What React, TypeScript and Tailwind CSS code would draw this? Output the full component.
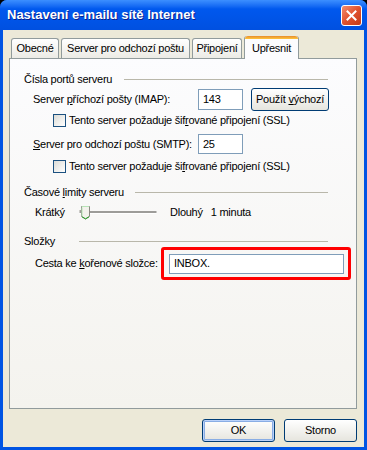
import * as React from 'react';

const font = { fontFamily: '"Liberation Sans", Arial, sans-serif' };

const Tab = ({ label, w, active }: { label: string; w: number; active?: boolean }) => {
  if (active) {
    return (
      <div
        className="relative z-10 -mb-px flex h-[23px] flex-col rounded-t-[3px] border-x border-[#919B9C] bg-[#FCFCFE]"
        style={{ width: w }}
      >
        <div className="h-[3px] rounded-t-[3px] bg-gradient-to-b from-[#E68B2C] to-[#FFC73C]" />
        <div className="flex flex-1 items-center justify-center pb-[2px]">{label}</div>
      </div>
    );
  }
  return (
    <div
      className="flex h-[20px] items-center justify-center rounded-t-[3px] border-x border-t border-[#919B9C] bg-gradient-to-b from-white to-[#ECEBE5] pb-[1px]"
      style={{ width: w }}
    >
      {label}
    </div>
  );
};

const Heading = ({ children, w }: { children: React.ReactNode; w: number }) => (
  <div className="flex h-[14px] items-center pl-[14px] pr-[28px]">
    <span className="shrink-0" style={{ width: w }}>
      {children}
    </span>
    <div className="h-px flex-1 bg-[#B9B7AA]" />
  </div>
);

const Checkbox = ({ children }: { children: React.ReactNode }) => (
  <div className="flex h-[13px] items-center pl-[43px]">
    <div className="h-[13px] w-[13px] shrink-0 border border-[#1C5180] bg-gradient-to-br from-[#DCDCD7] to-white" />
    <span className="ml-[3px]">{children}</span>
  </div>
);

const Input = ({ value, className }: { value: string; className: string }) => (
  <div className={`flex shrink-0 items-center border border-[#7F9DB9] bg-white pl-[4px] ${className}`}>{value}</div>
);

const Button = ({ children, w, focused }: { children: React.ReactNode; w: number; focused?: boolean }) => (
  <div
    className={`flex h-[23px] shrink-0 items-center justify-center rounded-[3px] border border-[#003C74] bg-gradient-to-b from-white to-[#E6E5DE] ${
      focused ? 'shadow-[inset_0_0_0_1px_#B9D1FA,inset_0_0_0_2px_#89ADE4]' : ''
    }`}
    style={{ width: w }}
  >
    {children}
  </div>
);

export default function App() {
  return (
    <div className="h-[450px] w-[367px] whitespace-nowrap bg-black text-[11px] text-black" style={font}>
      <div className="flex h-full flex-col overflow-hidden rounded-t-[7px] bg-[#0054E3]">
        {/* title bar */}
        <div className="flex h-[30px] shrink-0 items-center justify-between bg-gradient-to-b from-[#3C8FFF] via-[#0058EE] via-30% to-[#0050E0] pl-[7px] pr-[5px]">
          <span className="text-[13px] font-bold text-white [text-shadow:1px_1px_0_#0A1E8C]">
            Nastavení e-mailu sítě Internet
          </span>
          <div className="flex h-[21px] w-[21px] items-center justify-center rounded-[3px] border border-white bg-gradient-to-br from-[#F28C6E] via-[#E0512D] to-[#C43A17]">
            <svg width="11" height="11" viewBox="0 0 11 11">
              <path d="M1.5 1.5 L9.5 9.5 M9.5 1.5 L1.5 9.5" stroke="white" strokeWidth="2" strokeLinecap="square" />
            </svg>
          </div>
        </div>

        {/* body */}
        <div className="mx-[3px] mb-[3px] flex flex-1 flex-col bg-[#ECE9D8] pl-[6px] pr-[7px] pt-[5px] tracking-[-0.25px]">
          <div className="flex h-[23px] items-end gap-[2px] pl-[2px]">
            <Tab label="Obecné" w={48} />
            <Tab label="Server pro odchozí poštu" w={129} />
            <Tab label="Připojení" w={50} />
            <Tab label="Upřesnit" w={55} active />
          </div>

          <div className="flex h-[351px] flex-col border border-[#919B9C] bg-gradient-to-b from-[#FCFCFE] to-[#F4F3EE] pt-[13px]">
            <Heading w={100}>Čísla portů serveru</Heading>

            <div className="mt-[2px] flex h-[22px] items-center pl-[23px]">
              <span className="w-[165px] shrink-0">
                Server <u>p</u>říchozí pošty (IMAP):
              </span>
              <Input value="143" className="h-[21px] w-[45px]" />
              <div className="ml-[8px]">
                <Button w={78}>
                  <span>
                    Použít <u>v</u>ýchozí
                  </span>
                </Button>
              </div>
            </div>

            <div className="mt-[4px]">
              <Checkbox>
                Tento server požaduje šif<u>r</u>ované připojení (SSL)
              </Checkbox>
            </div>

            <div className="mt-[7px] flex h-[20px] items-center pl-[23px]">
              <span className="w-[165px] shrink-0">
                <u>S</u>erver pro odchozí poštu (SMTP):
              </span>
              <Input value="25" className="h-[20px] w-[45px]" />
            </div>

            <div className="mt-[6px]">
              <Checkbox>
                Tento server požaduje ši<u>f</u>rované připojení (SSL)
              </Checkbox>
            </div>

            <div className="mt-[12px]">
              <Heading w={111}>
                Časové <u>l</u>imity serveru
              </Heading>
            </div>

            <div className="mt-[5px] flex h-[16px] items-center pl-[25px]">
              <span className="w-[44px] shrink-0">Krátký</span>
              <svg width="78" height="16" viewBox="0 0 78 16" className="shrink-0">
                <rect x="0.5" y="7" width="77" height="2" fill="#9D9C99" />
                <rect x="0.5" y="9" width="77" height="1" fill="#FFFFFF" />
                <path d="M0.5 6.5 H3 V8.5" fill="none" stroke="#A5A39B" />
                <path d="M2.5 2.5 H10.5 V12.5 L6.5 15 L2.5 12.5 Z" fill="#F3F2EC" stroke="#8A8A82" />
                <path d="M3 12.8 L6.5 14.8 L10 12.8" fill="none" stroke="#21A121" />
                <path d="M3 3.5 V12" stroke="#B6E4B6" />
                <path d="M3 2.5 H10" stroke="#B6E4B6" />
              </svg>
              <span className="ml-[13px]">Dlouhý</span>
              <span className="ml-[8px]">1 minuta</span>
            </div>

            <div className="mt-[15px]">
              <div className="flex h-[12px] items-center pl-[14px] pr-[28px]">
                <span className="w-[55px] shrink-0">Složky</span>
                <div className="h-px flex-1 bg-[#B9B7AA]" />
              </div>
            </div>

            <div className="flex h-[33px] items-center pl-[25px]">
              <span className="w-[126px] shrink-0">
                Cesta ke <u>k</u>ořenové složce:
              </span>
              <div className="flex h-[33px] w-[190px] shrink-0 items-center rounded-[3px] border-[3px] border-[#FF0000] pl-[5px]">
                <Input value="INBOX." className="h-[20px] w-[175px]" />
              </div>
            </div>
          </div>

          <div className="mt-[10px] flex justify-end gap-[9px]">
            <Button w={73} focused>
              OK
            </Button>
            <Button w={73}>Storno</Button>
          </div>
        </div>
      </div>
    </div>
  );
}
